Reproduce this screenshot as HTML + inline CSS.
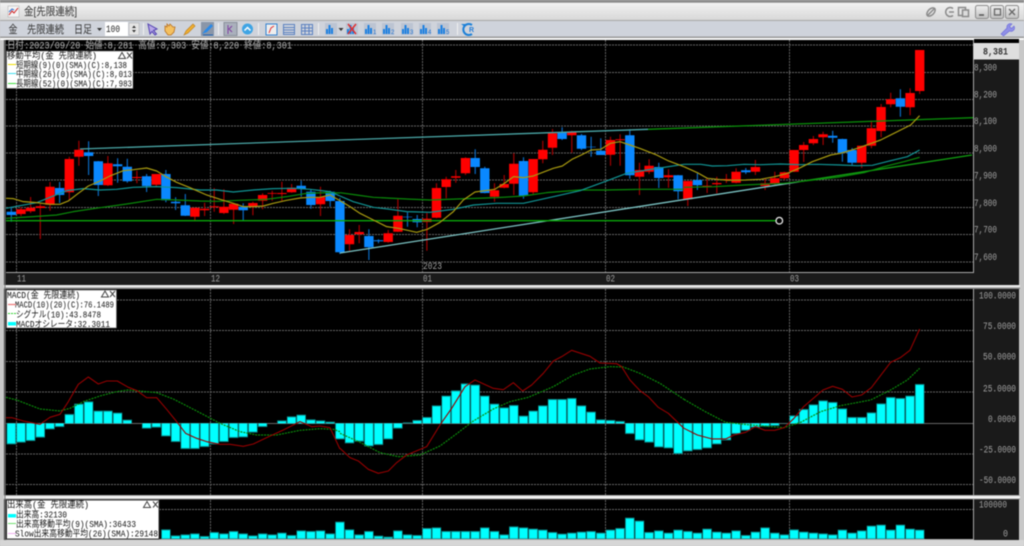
<!DOCTYPE html>
<html><head><meta charset="utf-8"><title>金[先限連続]</title>
<style>
html,body{margin:0;padding:0;background:#c8c8c8;width:1024px;height:546px;overflow:hidden}
svg{display:block;filter:blur(.45px)}
.ax{font:10px "Liberation Mono","Noto Sans CJK JP",monospace;fill:#a0a0a0}
.lg{font:9px "Liberation Mono","Noto Sans CJK JP",monospace;fill:#111}
.tb{font:11px "Liberation Sans","Noto Sans CJK JP",sans-serif;fill:#333}
</style></head><body>
<svg width="1024" height="546" viewBox="0 0 1024 546" xmlns="http://www.w3.org/2000/svg">
<defs>
<linearGradient id="tg" x1="0" y1="0" x2="0" y2="1"><stop offset="0" stop-color="#f2f2f2"/><stop offset=".45" stop-color="#e6e6e6"/><stop offset="1" stop-color="#d8d8d8"/></linearGradient>
<linearGradient id="bt" x1="0" y1="0" x2="0" y2="1"><stop offset="0" stop-color="#f0f0f0"/><stop offset="1" stop-color="#c0c0c0"/></linearGradient>
<g id="bars"><rect x="-6" y="-6" width="12" height="12" fill="#bcc4d2"/><path d="M-4 5V0M-1.5 5V-4M1 5V-1" stroke="#1c7fe0" stroke-width="2" fill="none"/></g>
</defs>
<rect width="1024" height="546" fill="#c8c8c8"/>
<!-- title bar -->
<rect width="1024" height="2.500" fill="#8c8c8c"/>
<rect y="3" width="1024" height="17" fill="url(#tg)"/>
<rect y="20" width="1024" height="1.500" fill="#a8a8a8"/>
<rect x="0" y="21" width="1024" height="16" fill="#cfd3db"/>
<rect y="36.500" width="1024" height="1.500" fill="#9a9a9a"/>
<rect y="38" width="1024" height="2" fill="#fafafa"/>
<rect x="8" y="6" width="11" height="11" fill="#f4f4f4" stroke="#aaa" stroke-width=".5"/>
<path d="M9 15l3-4 2 2 4-5" stroke="#d02020" fill="none"/><path d="M9 12l3-3 2 1" stroke="#3070d0" fill="none"/>
<text class="tb" x="24" y="15" font-size="11" textLength="53" lengthAdjust="spacingAndGlyphs">金[先限連続]</text>
<!-- window buttons -->
<g fill="none" stroke="#8a8a8a" stroke-width="1.500">
<ellipse cx="931" cy="12" rx="5" ry="3" transform="rotate(-45 931 12)"/><path d="M927 16l8-8"/>
<path d="M953 8.500a4.500 4.500 0 1 0 0 7M949 12h5"/>
<rect x="958.500" y="7.500" width="7" height="8"/><rect x="962.500" y="10" width="6" height="6.500" fill="#dcdcdc"/>
</g>
<g stroke="#8a8a8a" fill="url(#bt)"><rect x="975.500" y="5.500" width="13" height="13" rx="2"/><rect x="990.500" y="5.500" width="13" height="13" rx="2"/><rect x="1005.500" y="5.500" width="13" height="13" rx="2"/></g>
<path d="M979 15h5" stroke="#555" stroke-width="1.500"/><rect x="994.500" y="9" width="6" height="6" fill="none" stroke="#666" stroke-width="1.300"/><path d="M1009 9l6 6M1015 9l-6 6" stroke="#666" stroke-width="1.300"/>
<!-- toolbar -->
<text class="tb" x="8.500" y="33" textLength="9" lengthAdjust="spacingAndGlyphs">金</text>
<text class="tb" x="27" y="33" textLength="37" lengthAdjust="spacingAndGlyphs">先限連続</text>
<text class="tb" x="74" y="33" textLength="18" lengthAdjust="spacingAndGlyphs">日足</text>
<path d="M97 28h5l-2.500 3z" fill="#333"/>
<rect x="105" y="22" width="23" height="14" fill="#fff"/>
<text x="106" y="32" font-family="Liberation Mono,monospace" font-size="10" fill="#222" textLength="14" lengthAdjust="spacingAndGlyphs">100</text>
<rect x="129" y="23" width="10" height="12" fill="#e4e4e4" stroke="#aaa" stroke-width=".5"/><path d="M132 28l2-2.500 2 2.500zM132 30l2 2.500 2-2.500z" fill="#333"/>
<path d="M143.500 23v12M218.500 23v12M258.500 23v12M318.500 23v12M457.500 23v12" stroke="#f0f0f0"/>
<path d="M148 24l9 5-3.500 1.500 3 3.500-1.500 1-3-3.500-2 2.500z" fill="#b8a8e8" stroke="#5040b0"/>
<path d="M165 29v-3l2 1v-3l2 2 1-2 2 2 1 1 2 0-1 5-3 3h-3l-3-4z" fill="#f4c060" stroke="#b87020" stroke-width=".8"/>
<path d="M184 35l2-4 7-7 2 2-7 7z" fill="#f0b030" stroke="#c08020" stroke-width=".7"/>
<rect x="201" y="22" width="13" height="14" fill="#8a96a8"/><path d="M202 34l3-4 6-6 2 2-6 6z" fill="#2a8ae8"/><path d="M203 35h10" stroke="#1c60b0"/>
<rect x="224" y="22.500" width="13" height="13" fill="#aab0bc" stroke="#8a8f9a"/><path d="M228 25v9M232 26l-3 3 3 3" stroke="#8040a0" fill="none"/>
<circle cx="247.500" cy="29" r="5.500" fill="#3ea4e4"/><path d="M244.500 30.500l3-3 3 3" stroke="#fff" stroke-width="1.500" fill="none"/>
<rect x="266" y="24" width="11" height="11" fill="#eee" stroke="#3080d0"/><path d="M269 33l2-5 3-2" stroke="#e03030" fill="none"/>
<g stroke="#5a80c0" fill="none"><rect x="283.500" y="24.500" width="11" height="10"/><path d="M284 27.500h10M284 30h10M284 32.500h10"/><rect x="301.500" y="24.500" width="11" height="10"/><path d="M302 28h10M302 31h10M305 25v9M309 25v9"/></g>
<use href="#bars" x="331" y="29"/><path d="M338.500 28h5l-2.500 3z" fill="#333"/>
<use href="#bars" x="352" y="29"/><path d="M348 24l8 10M356 24l-8 10" stroke="#e03030" stroke-width="1.500"/>
<use href="#bars" x="370" y="29"/><use href="#bars" x="388" y="29"/><use href="#bars" x="407" y="29"/><use href="#bars" x="425" y="29"/><use href="#bars" x="443" y="29"/>
<g font-family="Liberation Sans,sans-serif" font-size="6" fill="#1c70d0"><text x="373" y="34">1</text><text x="391" y="34">2</text><text x="410" y="34">3</text><text x="428" y="34">4</text><text x="446" y="34">5</text></g>
<path d="M472 25a5.500 5.500 0 1 0 0 9" fill="none" stroke="#1c80d8" stroke-width="2"/><path d="M461 24l4 0 0 3z" fill="#1c80d8"/>
<text x="469" y="32" font-family="Liberation Sans,sans-serif" font-size="7" font-weight="bold" fill="#2a80d8">R</text>
<path d="M1001 34l6-6a3.500 3.500 0 0 1 5-4l-2.500 2.500 2 2 2.500-2.500a3.500 3.500 0 0 1-4.500 5l-6 5z" fill="#9090e8" stroke="#6a6ad8" stroke-width=".6"/>

<!-- panels -->
<rect x="4" y="40" width="1015" height="245" fill="#1a1a1a"/>
<rect x="6" y="40" width="967" height="232" fill="#000"/>
<rect x="4" y="285" width="1016" height="3.500" fill="#e8e8e8"/><rect x="4" y="287.500" width="1016" height="1.500" fill="#888"/>
<rect x="4" y="289" width="1015" height="207" fill="#1a1a1a"/>
<rect x="6" y="289" width="967" height="207" fill="#000"/>
<rect x="4" y="495" width="1016" height="1.500" fill="#aaa"/><rect x="4" y="496" width="1016" height="3" fill="#f4f4f4"/><rect x="4" y="498.500" width="1016" height="1" fill="#888"/>
<rect x="4" y="499.500" width="1015" height="40.500" fill="#1a1a1a"/>
<rect x="6" y="499.500" width="967" height="40" fill="#000"/>
<rect x="0" y="540" width="1024" height="6" fill="#d6d6d6"/>
<path d="M5 40V540" stroke="#777"/>
<path d="M973.500 40V273M973.500 289V496M973.500 499V540M6 272.500H974M6 539.500H974" stroke="#a8a8a8" stroke-width="1"/>

<!-- grid -->
<g stroke="#666" stroke-width="1" stroke-dasharray="2 1" fill="none">
<path d="M6 45H973M6 72.500H973M6 99.500H973M6 126H973M6 153H973M6 180H973M6 207.500H973M6 234.500H973M6 262H973"/>
<path d="M6 300H973M6 330.500H973M6 361.500H973M6 392H973M6 454H973M6 484.500H973M6 509.500H973"/>
<path d="M16.500 40V272M210.500 40V272M422.500 40V272M605.500 40V272M789.500 40V272M16.500 289V496M210.500 289V496M422.500 289V496M605.500 289V496M789.500 289V496M16.500 500V539M210.500 500V539M422.500 500V539M605.500 500V539M789.500 500V539"/>
</g>
<path d="M6 423.500H973" stroke="#666"/>

<!-- candle wicks -->
<path fill="none" stroke="#a00000" stroke-width="1.200" d="M21 207V216M30.600 197V213M40.300 204V239M50 182V210.700M69.300 156.700V200M78.900 140.700V165.700M107.900 156V186M136.900 170.700V183.300M156.300 174V186.700M194.900 207.700V220M204.600 202.700V216M214.200 188V211.700M223.900 189.300V214M233.600 203.300V224M252.900 201.700V215.300M262.600 193.300V209.300M272.200 190.700V200.700M281.900 181.700V200.700M291.600 184V192.700M320.500 186.700V216M349.500 229.300V250.700M359.200 225V243.300M388.200 230V242.700M397.900 199.300V232M426.900 213V250.700M436.500 183.300V218.300M446.200 176.700V198.300M455.800 170V182.700M465.500 157.300V175M494.500 183.300V201.700M504.200 175V188.300M513.800 153.300V195M533.200 159V194M542.800 140.700V163.300M552.500 129V155M571.800 130.700V152.700M610.500 136.700V165.700M620.100 134.300V165.700M639.500 162.700V195M649.100 159.300V174M668.500 169.300V187.700M687.800 181V206M707.100 178V193M716.800 176.700V193.300M726.400 174V183M736.100 168.300V183.300M755.400 160V175M765.100 178V190M774.800 171.700V185M784.400 171.700V180M794.100 150V172M803.700 142V162M813.400 136V145M823.100 131.700V145M861.700 145.700V168M871.400 120.700V148.300M881.100 104V137.300M890.700 92.700V107.300M910.100 88.300V115.300M919.700 50V94"/>
<path fill="none" stroke="#0a68c0" stroke-width="1.200" d="M11.300 206.700V221.700M59.600 182V203M88.600 141.300V175M98.300 161V196M117.600 158.300V182.700M127.300 158.700V182.700M146.600 174V192M165.900 170V202.300M175.600 197.300V210M185.300 194V216M243.200 203.300V220M301.200 180.700V196.700M310.900 189.300V208.700M330.200 190.700V206.700M339.900 198V254M368.900 229.300V260M378.500 239.300V243.300M407.500 212.300V226.700M417.200 215V227.300M475.200 149.300V174M484.800 166.700V193.300M523.500 157.300V198.700M562.100 127.300V140M581.500 134V150M591.100 136.700V156.700M600.800 138.300V155M629.800 129.300V178.700M658.800 162.700V188M678.100 175V199.300M697.400 173.300V190M745.800 168V174M832.700 130.700V142.700M842.400 138.700V161.700M852.100 148V165M900.400 89.300V116.700"/>
<!-- candle bodies -->
<path fill="none" stroke="#ff0000" stroke-width="9.400" d="M21 209.300V214M30.600 207.700V211.300M40.300 206.300V208M50 186.700V204.700M69.300 159V192.300M78.900 149.700V156.700M107.900 163.300V185.300M136.900 177V178M156.300 174V184.700M194.900 207.700V216.700M204.600 208.700V210.300M214.200 206.300V207.300M223.900 206.700V213M233.600 203.700V209.700M252.900 203V206.700M262.600 195V200.700M272.200 193V193.700M281.900 193V194M291.600 187.700V192.300M320.500 197V204.300M349.500 235V244.300M359.200 232V234.300M388.200 233.300V242M397.900 215.700V231.700M426.900 218.700V222M436.500 188V217.700M446.200 179.300V187M455.800 176.300V177.700M465.500 158V173.300M494.500 190.300V196.700M504.200 184V187.700M513.800 163.700V183.700M533.200 159V192.300M542.800 149.700V159.300M552.500 133.300V147.700M571.800 132V135.300M610.500 140V154.700M620.100 139.300V140.300M639.500 170V176.700M649.100 165.700V171.700M668.500 175.300V177.300M687.800 181V199.300M707.100 185.700V186.700M716.800 183V184.300M726.400 179V180M736.100 171.700V182.700M755.400 167V171.700M765.100 183.300V186M774.800 178.300V183.700M784.400 172.300V178.300M794.100 150V171.700M803.700 145V150M813.400 139V143.300M823.100 134.300V137.300M861.700 145.700V162.700M871.400 128.300V145.700M881.100 107V131M890.700 99.300V104.300M910.100 93V107.300M919.700 50V91"/>
<path fill="none" stroke="#0a88ff" stroke-width="9.400" d="M11.300 211.700V215M59.600 188V195M88.600 152.300V156M98.300 161.300V185M117.600 164.300V166.300M127.300 166.700V181.300M146.600 176.300V186M165.900 174V200.300M175.600 201.700V203.300M185.300 205.300V215.700M243.200 206.700V210.300M301.200 185.700V189M310.900 191.700V205M330.200 191.700V201M339.900 201V252.300M368.900 236V247.300M378.500 240.300V241.300M407.500 216.700V217.300M417.200 219V222.300M475.200 158V167M484.800 168.300V193M523.500 161V196M562.100 132.300V139M581.500 135.300V148.700M591.100 146.700V147.300M600.800 150.700V155M629.800 135.300V175.300M658.800 167V178M678.100 175.300V191.300M697.400 180V185.300M745.800 170.300V172.300M832.700 135.700V137.700M842.400 139V152.700M852.100 150V162.700M900.400 98.300V106.700"/>

<!-- trendlines -->
<path d="M80 149L648 129.300" stroke="#4aa6a6" stroke-width="1.300" fill="none"/>
<path d="M648 129.300L973 117.700" stroke="#0a8f0a" stroke-width="1.300" fill="none"/>
<path d="M340 253L799 181.700" stroke="#7cc4c4" stroke-width="1.300" fill="none"/>
<path d="M799 181.700L972 155" stroke="#12a012" stroke-width="1.300" fill="none"/>
<path d="M6 220.700H776" stroke="#0aa80a" stroke-width="1.300" fill="none"/>
<circle cx="779.300" cy="220.700" r="3.300" fill="#000" stroke="#e8e8e8" stroke-width="1.300"/>

<!-- MA lines -->
<g fill="none" stroke-width="3.600" stroke-linejoin="round">
<g transform="translate(0,100) scale(.3333)">
<polyline stroke="#0a8a0a" points="18,355 50,353 100,350 170,345 220,335 300,323 380,312 470,298 530,300 600,303 650,304 720,301 800,298 860,290 920,280 980,278 1020,279"/>
<polyline stroke="#119494" points="18,325 60,317 110,308 150,292 200,272 250,266 300,270 350,268 400,262 470,260 530,263 600,270 650,270 700,276 760,270 820,266 880,265 930,268 990,275 1020,288"/>
<polyline stroke="#a89a10" points="18,295 40,296 70,305 110,308 150,313 180,313 205,303 235,280 265,258 300,243 330,228 370,212 400,209 440,204 470,213 498,230 530,247 570,263 620,285 660,298 700,310 730,320 760,320 790,318 820,310 860,301 900,294 930,292 960,292 990,285 1020,302"/>
</g>
<g transform="translate(340,100) scale(.3333)">
<polyline stroke="#0a8a0a" points="0,278 50,285 100,292 200,297 270,300 350,297 470,293 550,288 620,278 720,270 800,270 900,268 1032,268"/>
<polyline stroke="#119494" points="0,288 40,305 100,322 150,328 200,335 270,337 340,328 400,315 470,310 550,310 640,290 720,272 800,243 860,220 920,210 1032,193"/>
<polyline stroke="#a89a10" points="0,302 30,320 60,340 100,360 140,380 175,385 230,397 262,388 300,367 340,335 370,300 405,276 434,272 464,268 493,250 521,230 550,233 580,228 640,205 667,198 696,178 724,165 753,150 782,148 811,130 840,125 870,135 899,145 950,165 986,183 1032,200"/>
</g>
<g transform="translate(684,150) scale(.3333)">
<polyline stroke="#0a8a0a" points="0,112 90,110 180,105 300,100 345,95 460,82 540,68 600,50 660,35 707,22"/>
<polyline stroke="#119494" points="0,43 50,43 85,48 130,47 180,43 230,44 290,42 345,44 400,43 470,45 520,47 565,46 620,32 670,20 707,0"/>
<polyline stroke="#a89a10" points="0,50 40,68 70,85 100,88 130,91 185,90 230,88 272,80 310,70 345,55 385,35 440,15 470,10 520,-5 590,-30 680,-75 707,-103"/>
</g>
</g>

<!-- MACD histogram -->
<g transform="translate(0,285) scale(1,.3333)">
<path fill="none" stroke="#0a8585" stroke-width="9.400" d="M11.300 415V478M21 415V473M30.600 415V468M40.300 415V458M50 415V433M59.600 415V426M69.300 415V387M78.900 415V356M88.600 415V349M98.300 415V377M107.900 415V377M117.600 415V383M127.300 415V404M146.600 415V431M156.300 415V428M165.900 415V454M175.600 415V471M185.300 415V492M194.900 415V492M204.600 415V486M214.200 415V478M223.900 415V471M233.600 415V459M243.200 415V457M252.900 415V443M262.600 415V426M281.900 415V406M291.600 415V394M301.200 415V389M310.900 415V403M320.500 415V406M330.200 415V410M339.900 415V463M349.500 415V475M359.200 415V470M368.900 415V484M378.500 415V480M388.200 415V463M397.900 415V431M407.500 415V412M417.200 415V405M426.900 415V396M436.500 415V361M446.200 415V332M455.800 415V316M465.500 415V295M475.200 415V299M484.800 415V332M494.500 415V356M504.200 415V367M513.800 415V360M523.500 415V392M533.200 415V377M542.800 415V361M552.500 415V342M562.100 415V342M571.800 415V339M581.500 415V361M591.100 415V380M600.800 415V403M610.500 415V405M620.100 415V408M629.800 415V447M639.500 415V466M649.100 415V473M658.800 415V487M668.500 415V490M678.100 415V507M687.800 415V499M697.400 415V495M707.100 415V490M716.800 415V478M726.400 415V466M736.100 415V447M745.800 415V437M755.400 415V428M765.100 415V425M774.800 415V423M784.400 415V416M794.100 415V391M803.700 415V372M813.400 415V358M823.100 415V346M832.700 415V351M842.400 415V370M852.100 415V396M861.700 415V396M871.400 415V382M881.100 415V355M890.700 415V336M900.400 415V339M910.100 415V332M919.700 415V297"/>
<path fill="none" stroke="#00ffff" stroke-width="8" d="M11.300 415V475M21 415V470M30.600 415V465M40.300 415V455M50 415V430M59.600 415V423M69.300 415V390M78.900 415V359M88.600 415V352M98.300 415V380M107.900 415V380M117.600 415V386M127.300 415V407M146.600 415V428M156.300 415V425M165.900 415V451M175.600 415V468M185.300 415V489M194.900 415V489M204.600 415V483M214.200 415V475M223.900 415V468M233.600 415V456M243.200 415V454M252.900 415V440M262.600 415V423M281.900 415V409M291.600 415V397M301.200 415V392M310.900 415V406M320.500 415V409M330.200 415V413M339.900 415V460M349.500 415V472M359.200 415V467M368.900 415V481M378.500 415V477M388.200 415V460M397.900 415V428M417.200 415V408M426.900 415V399M436.500 415V364M446.200 415V335M455.800 415V319M465.500 415V298M475.200 415V302M484.800 415V335M494.500 415V359M504.200 415V370M513.800 415V363M523.500 415V395M533.200 415V380M542.800 415V364M552.500 415V345M562.100 415V345M571.800 415V342M581.500 415V364M591.100 415V383M600.800 415V406M610.500 415V408M620.100 415V411M629.800 415V444M639.500 415V463M649.100 415V470M658.800 415V484M668.500 415V487M678.100 415V504M687.800 415V496M697.400 415V492M707.100 415V487M716.800 415V475M726.400 415V463M736.100 415V444M745.800 415V434M755.400 415V425M765.100 415V422M774.800 415V420M794.100 415V394M803.700 415V375M813.400 415V361M823.100 415V349M832.700 415V354M842.400 415V373M852.100 415V399M861.700 415V399M871.400 415V385M881.100 415V358M890.700 415V339M900.400 415V342M910.100 415V335M919.700 415V300"/>
</g>
<!-- MACD lines -->
<g fill="none" stroke-width="3.300" stroke-linejoin="round">
<g transform="translate(0,285) scale(.3333)">
<polyline stroke="#0a8a0a" stroke-width="3.600" stroke-dasharray="6 3" points="18,337 50,345 120,372 180,378 210,370 250,350 300,333 350,320 385,315 470,323 520,342 590,378 660,415 720,440 770,450 830,450 900,436 960,431 1000,433 1020,440"/>
<polyline stroke="#950000" points="18,398 35,398 70,408 120,418 150,397 180,388 205,350 235,298 265,276 295,297 320,288 352,288 385,307 411,317 440,338 470,338 500,373 530,410 557,445 590,460 620,470 660,478 690,478 730,484 760,477 800,458 850,435 900,410 935,425 960,423 990,428 1005,460 1020,492"/>
</g>
<g transform="translate(340,285) scale(.3333)">
<polyline stroke="#0a8a0a" stroke-width="3.600" stroke-dasharray="6 3" points="0,445 60,472 120,503 175,515 240,510 300,483 345,450 400,408 460,372 510,350 565,337 640,305 700,270 750,252 810,245 850,246 900,265 960,295 1032,343"/>
<polyline stroke="#950000" points="0,490 30,518 55,528 85,553 115,565 145,558 170,533 200,510 260,485 300,420 335,370 375,305 405,285 460,310 490,314 520,293 548,318 575,300 610,265 640,228 665,215 695,196 750,214 780,234 830,236 845,245 870,285 900,317 925,335 955,367 985,385 1032,430"/>
</g>
<g transform="translate(684,285) scale(.3333)">
<polyline stroke="#0a8a0a" stroke-width="3.600" stroke-dasharray="6 3" points="0,343 60,378 125,412 200,420 300,428 350,412 410,380 470,362 560,345 620,315 670,285 707,250"/>
<polyline stroke="#950000" points="0,430 40,450 85,462 125,462 150,450 185,442 214,425 243,436 272,436 301,428 330,400 359,365 417,315 446,304 475,313 504,336 533,330 562,308 620,232 649,218 678,196 707,132"/>
</g>
</g>

<!-- volume -->
<g transform="translate(0,470) scale(1,.3333)">
<path fill="none" stroke="#0a8585" stroke-width="9.400" d="M165.900 207V178M175.600 207V196M185.300 207V193M194.900 207V190M204.600 207V198M214.200 207V186M223.900 207V190M233.600 207V183M243.200 207V190M252.900 207V196M262.600 207V190M272.200 207V193M281.900 207V188M291.600 207V195M301.200 207V181M310.900 207V183M320.500 207V181M330.200 207V190M339.900 207V155M349.500 207V178M359.200 207V193M368.900 207V183M378.500 207V197M388.200 207V200M397.900 207V181M407.500 207V193M417.200 207V195M426.900 207V174M436.500 207V172M446.200 207V183M455.800 207V183M465.500 207V183M475.200 207V183M484.800 207V172M494.500 207V183M504.200 207V193M513.800 207V169M523.500 207V172M533.200 207V176M542.800 207V179M552.500 207V186M562.100 207V191M571.800 207V188M581.500 207V185M591.100 207V183M600.800 207V188M610.500 207V179M620.100 207V174M629.800 207V143M639.500 207V152M649.100 207V186M658.800 207V181M668.500 207V188M678.100 207V179M687.800 207V183M697.400 207V188M707.100 207V176M716.800 207V185M726.400 207V188M736.100 207V181M745.800 207V195M755.400 207V185M765.100 207V172M774.800 207V188M784.400 207V193M794.100 207V178M803.700 207V185M813.400 207V188M823.100 207V190M832.700 207V193M842.400 207V179M852.100 207V188M861.700 207V181M871.400 207V167M881.100 207V164M890.700 207V179M900.400 207V164M910.100 207V176M919.700 207V179"/>
<path fill="none" stroke="#00ffff" stroke-width="8" d="M165.900 205V181M175.600 205V199M185.300 205V196M194.900 205V193M204.600 205V201M214.200 205V189M223.900 205V193M233.600 205V186M243.200 205V193M252.900 205V199M262.600 205V193M272.200 205V196M281.900 205V191M291.600 205V198M301.200 205V184M310.900 205V186M320.500 205V184M330.200 205V193M339.900 205V158M349.500 205V181M359.200 205V196M368.900 205V186M378.500 205V200M388.200 205V203M397.900 205V184M407.500 205V196M417.200 205V198M426.900 205V177M436.500 205V175M446.200 205V186M455.800 205V186M465.500 205V186M475.200 205V186M484.800 205V175M494.500 205V186M504.200 205V196M513.800 205V172M523.500 205V175M533.200 205V179M542.800 205V182M552.500 205V189M562.100 205V194M571.800 205V191M581.500 205V188M591.100 205V186M600.800 205V191M610.500 205V182M620.100 205V177M629.800 205V146M639.500 205V155M649.100 205V189M658.800 205V184M668.500 205V191M678.100 205V182M687.800 205V186M697.400 205V191M707.100 205V179M716.800 205V188M726.400 205V191M736.100 205V184M745.800 205V198M755.400 205V188M765.100 205V175M774.800 205V191M784.400 205V196M794.100 205V181M803.700 205V188M813.400 205V191M823.100 205V193M832.700 205V196M842.400 205V182M852.100 205V191M861.700 205V184M871.400 205V170M881.100 205V167M890.700 205V182M900.400 205V167M910.100 205V179M919.700 205V182"/>
</g>

<!-- status line -->
<text class="ax" x="7" y="48.500" style="font-size:10px;fill:#b4b4b4" textLength="285" lengthAdjust="spacingAndGlyphs">日付:2023/09/20 始値:8,281 高値:8,303 安値:8,220 終値:8,301</text>

<!-- legend main -->
<rect x="6.500" y="51" width="126.500" height="37.500" fill="#fff" stroke="#555" stroke-width=".6"/>
<text class="lg" x="7" y="58.500" textLength="90" lengthAdjust="spacingAndGlyphs">移動平均(金 先限連続)</text>
<text class="lg" x="16" y="68" textLength="111" lengthAdjust="spacingAndGlyphs">短期線(9)(0)(SMA)(C):8,138</text>
<text class="lg" x="16" y="77" textLength="116" lengthAdjust="spacingAndGlyphs">中期線(26)(0)(SMA)(C):8,013</text>
<text class="lg" x="16" y="86.500" textLength="116" lengthAdjust="spacingAndGlyphs">長期線(52)(0)(SMA)(C):7,983</text>
<path d="M8 64.500h8" stroke="#f0e000"/><path d="M8 73.500h8" stroke="#40e0f0"/><path d="M8 83.500h8" stroke="#40e040"/>
<path d="M118.500 58.500l3.500-6 3.500 6z" fill="none" stroke="#444"/><path d="M127 52.500l5 6M132 52.500l-5 6" stroke="#444"/>

<!-- legend MACD -->
<rect x="6.500" y="290" width="110" height="38" fill="#fff" stroke="#555" stroke-width=".6"/>
<text class="lg" x="7" y="298" textLength="73" lengthAdjust="spacingAndGlyphs">MACD(金 先限連続)</text>
<text class="lg" x="15" y="307.500" textLength="99" lengthAdjust="spacingAndGlyphs">MACD(10)(20)(C):76.1489</text>
<text class="lg" x="16" y="317.500" textLength="85" lengthAdjust="spacingAndGlyphs">シグナル(10):43.8478</text>
<text class="lg" x="16" y="327" textLength="94" lengthAdjust="spacingAndGlyphs">MACDオシレータ:32.3011</text>
<path d="M8 304.500h8" stroke="#f08080" stroke-width="1.300"/><path d="M8 313.500h8" stroke="#30d030" stroke-dasharray="2 1"/><rect x="8" y="322" width="8" height="3.500" fill="#00ffff"/>
<path d="M101.500 297l3.500-6 3.500 6z" fill="none" stroke="#444"/><path d="M110 291l5 6M115 291l-5 6" stroke="#444"/>

<!-- legend volume -->
<rect x="6.500" y="500" width="152.500" height="39" fill="#fff" stroke="#333" stroke-width="1"/>
<text class="lg" x="7" y="507.500" textLength="82" lengthAdjust="spacingAndGlyphs">出来高(金 先限連続)</text>
<text class="lg" x="16" y="517.500" textLength="51" lengthAdjust="spacingAndGlyphs">出来高:32130</text>
<text class="lg" x="16" y="527" textLength="120" lengthAdjust="spacingAndGlyphs">出来高移動平均(9)(SMA):36433</text>
<text class="lg" x="15" y="536.500" textLength="143" lengthAdjust="spacingAndGlyphs">Slow出来高移動平均(26)(SMA):29148</text>
<rect x="8" y="514" width="8" height="3.500" fill="#00ffff"/><path d="M8 523.500h8" stroke="#70e070"/><path d="M8 533.500h8" stroke="#f0b0f0"/>
<path d="M143.500 507.500l3.500-6 3.500 6z" fill="none" stroke="#444"/><path d="M153 501.500l5 6M158 501.500l-5 6" stroke="#444"/>

<!-- axis price -->
<rect x="974" y="39" width="45" height="4" fill="#000"/>
<rect x="973.500" y="43" width="45.500" height="16.500" fill="#dedede"/>
<text x="983" y="54.500" font-family="Liberation Mono,monospace" font-size="10" font-weight="bold" fill="#333" textLength="25" lengthAdjust="spacingAndGlyphs">8,381</text>
<g class="ax">
<text class="ax" x="974" y="70.500" textLength="23" lengthAdjust="spacingAndGlyphs">8,300</text>
<text class="ax" x="974" y="97.500" textLength="23" lengthAdjust="spacingAndGlyphs">8,200</text>
<text class="ax" x="974" y="124" textLength="23" lengthAdjust="spacingAndGlyphs">8,100</text>
<text class="ax" x="974" y="151.500" textLength="23" lengthAdjust="spacingAndGlyphs">8,000</text>
<text class="ax" x="974" y="178.500" textLength="23" lengthAdjust="spacingAndGlyphs">7,900</text>
<text class="ax" x="974" y="206" textLength="23" lengthAdjust="spacingAndGlyphs">7,800</text>
<text class="ax" x="974" y="232.700" textLength="23" lengthAdjust="spacingAndGlyphs">7,700</text>
<text class="ax" x="974" y="260" textLength="23" lengthAdjust="spacingAndGlyphs">7,600</text>
<text class="ax" x="979" y="298.500" textLength="37" lengthAdjust="spacingAndGlyphs">100.0000</text>
<text class="ax" x="983" y="328.800" textLength="33" lengthAdjust="spacingAndGlyphs">75.0000</text>
<text class="ax" x="983" y="359.500" textLength="33" lengthAdjust="spacingAndGlyphs">50.0000</text>
<text class="ax" x="983" y="391.500" textLength="33" lengthAdjust="spacingAndGlyphs">25.0000</text>
<text class="ax" x="988" y="421.800" textLength="28" lengthAdjust="spacingAndGlyphs">0.0000</text>
<text class="ax" x="979" y="452.500" textLength="37" lengthAdjust="spacingAndGlyphs">-25.0000</text>
<text class="ax" x="979" y="482.800" textLength="37" lengthAdjust="spacingAndGlyphs">-50.0000</text>
<text class="ax" x="979" y="507.500" textLength="28" lengthAdjust="spacingAndGlyphs">100000</text>
<text class="ax" x="1003" y="536.500" textLength="5" lengthAdjust="spacingAndGlyphs">0</text>
<text class="ax" x="17" y="281.500" textLength="9" lengthAdjust="spacingAndGlyphs">11</text>
<text class="ax" x="211" y="281.500" textLength="9" lengthAdjust="spacingAndGlyphs">12</text>
<text class="ax" x="423" y="281.500" textLength="9" lengthAdjust="spacingAndGlyphs">01</text>
<text class="ax" x="423" y="269" textLength="19" lengthAdjust="spacingAndGlyphs">2023</text>
<text class="ax" x="606" y="281.500" textLength="9" lengthAdjust="spacingAndGlyphs">02</text>
<text class="ax" x="790" y="281.500" textLength="9" lengthAdjust="spacingAndGlyphs">03</text>
</g>
</svg>
</body></html>
